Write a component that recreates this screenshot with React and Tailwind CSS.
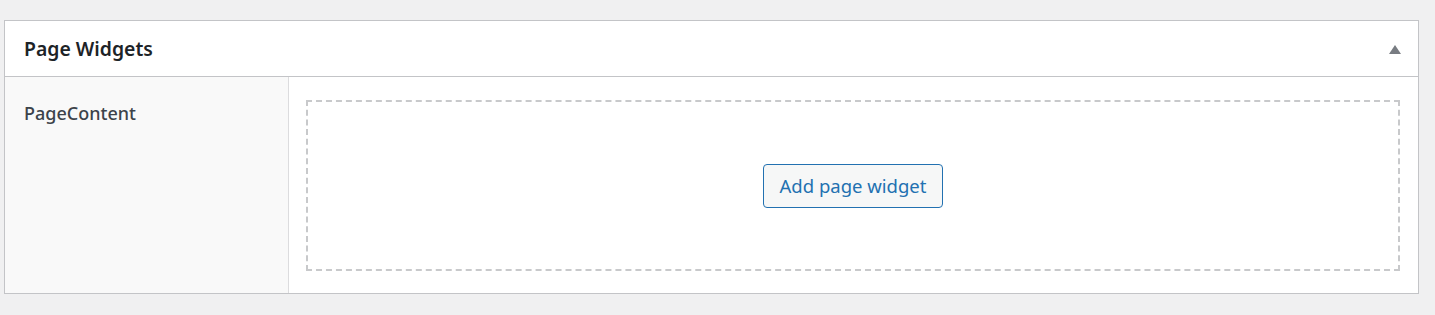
import React from 'react';

const App = () => {
  return (
    <div className="min-h-[315px] bg-[#f0f0f1] pt-5 pl-1 pr-4 pb-5" style={{ fontFamily: '"Noto Sans", "Open Sans", sans-serif' }}>
      <div className="border border-[#c3c4c7] bg-white">
        {/* Header */}
        <div className="flex h-[56px] items-center justify-between border-b border-[#c3c4c7] pl-[19px] pr-[17px]">
          <h2 className="text-[19.4px] font-semibold leading-none text-[#1d2327]">Page Widgets</h2>
          <svg width="12" height="9" viewBox="0 0 12 9" className="mt-[1px]">
            <polygon points="6,0 12,9 0,9" fill="#787c82" />
          </svg>
        </div>

        {/* Body */}
        <div className="flex">
          <div className="w-[284px] shrink-0 border-r border-[#dcdcde] bg-[#f9f9f9] pl-[19px] pt-[23px] pb-[22px]">
            <div className="text-[18px] font-medium text-[#3c434a]">PageContent</div>
          </div>
          <div className="flex-1 pl-[17px] pr-[18px] pt-[23px] pb-[22px]">
            <div className="flex h-[171px] items-center justify-center border-2 border-dashed border-[#c8c9cb]">
              <button className="h-[44px] w-[180px] rounded-[4px] border border-[#2271b1] bg-[#f6f7f7] text-[18.5px] text-[#2271b1]">
                Add page widget
              </button>
            </div>
          </div>
        </div>
      </div>
    </div>
  );
};

export default App;
